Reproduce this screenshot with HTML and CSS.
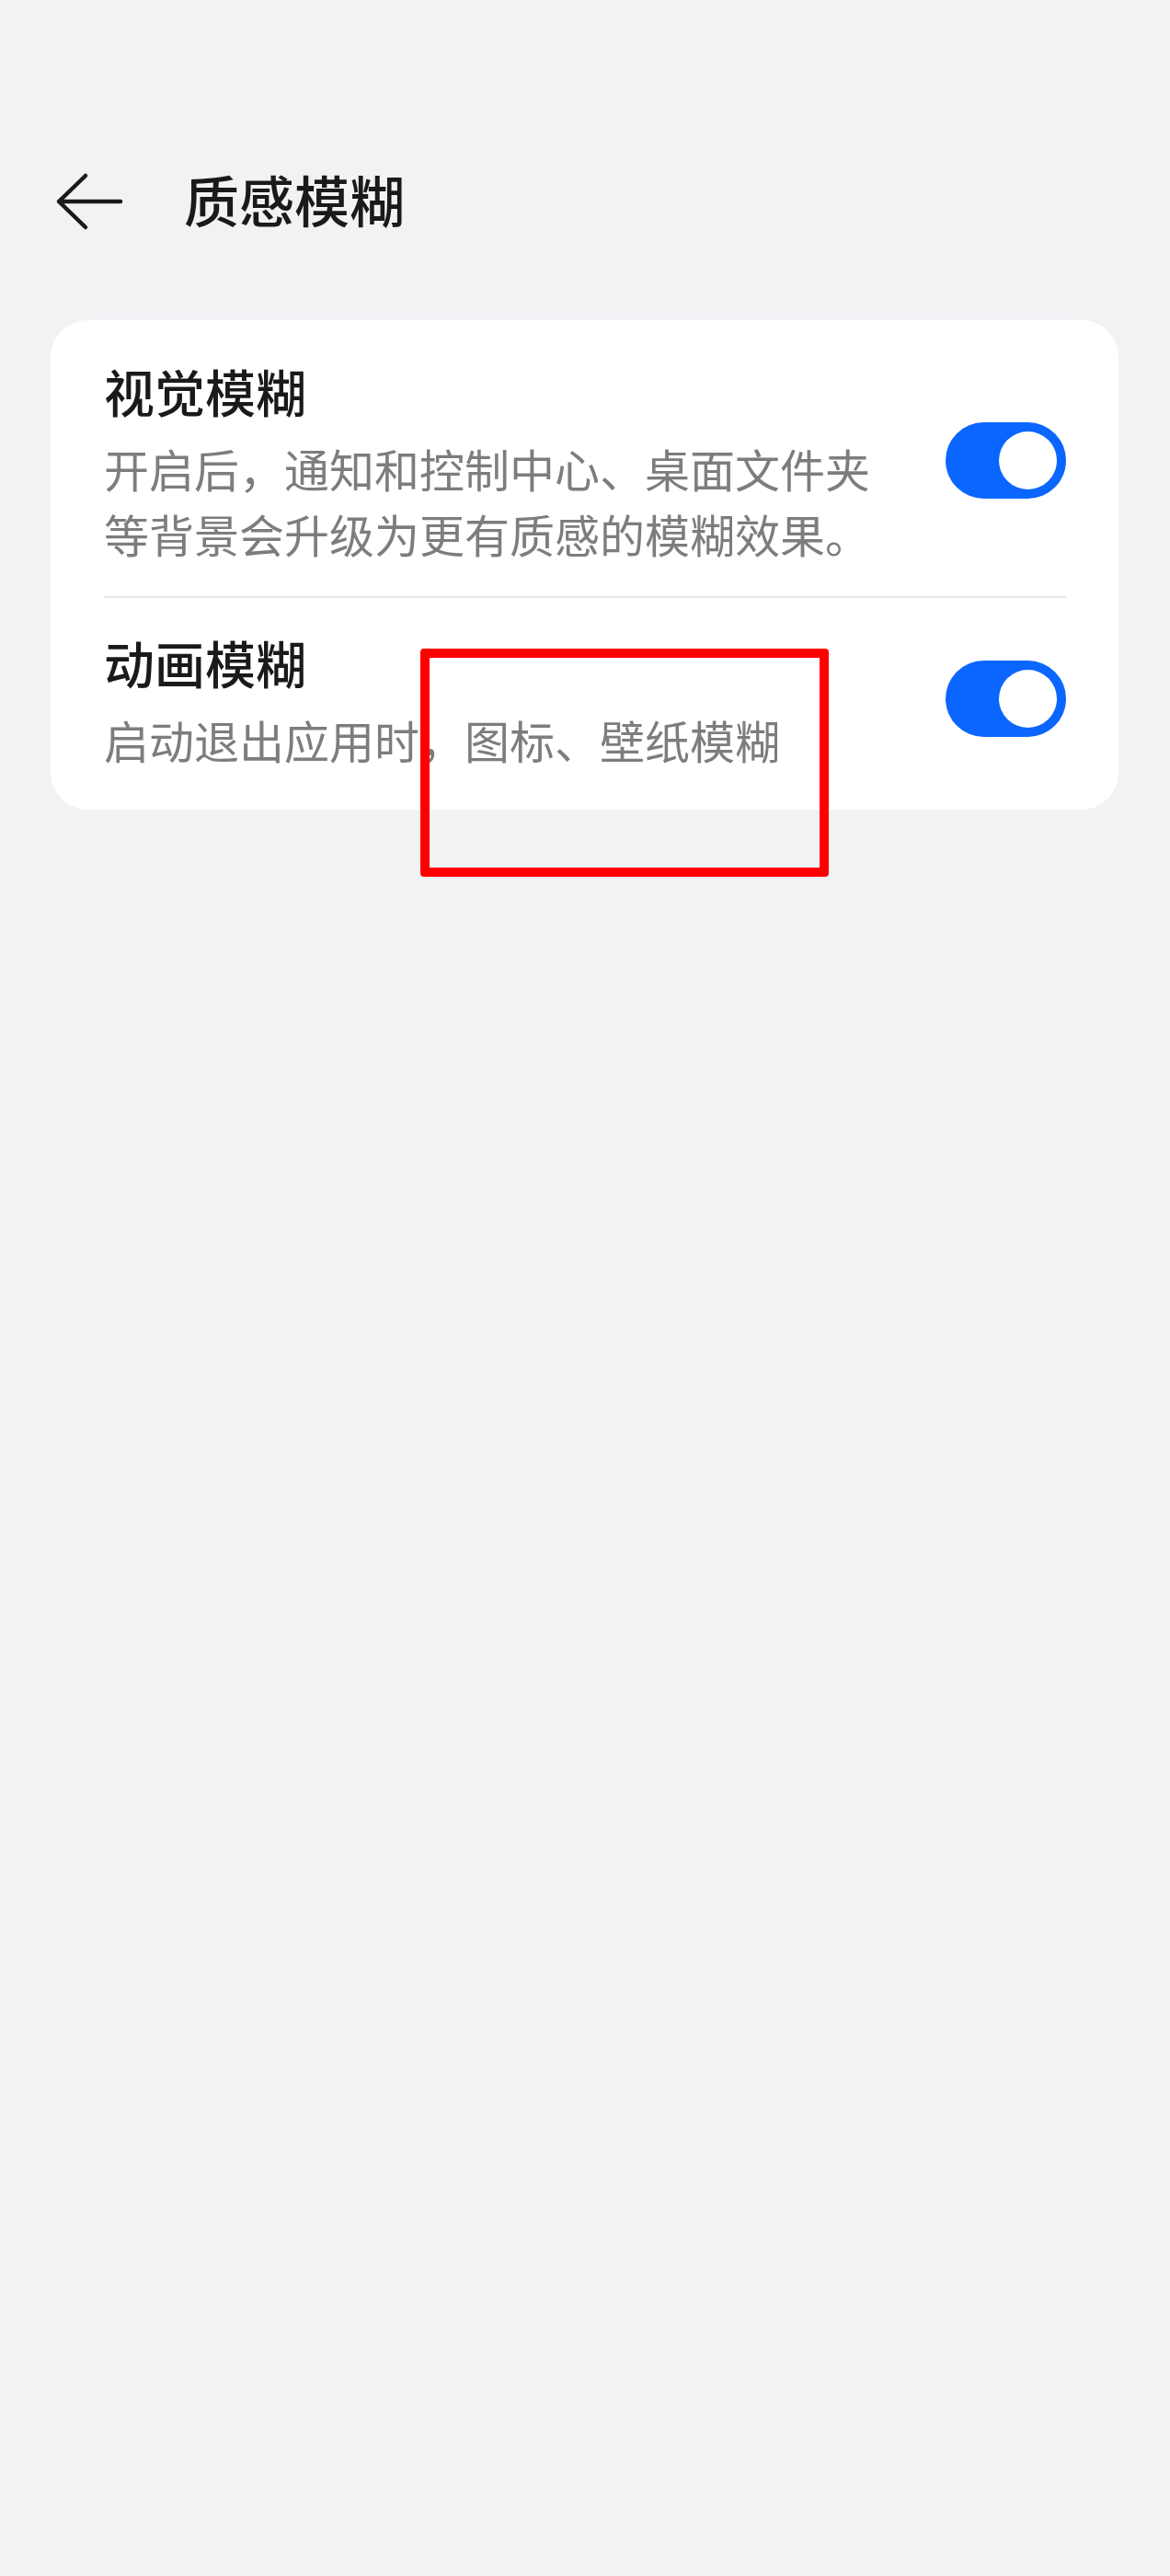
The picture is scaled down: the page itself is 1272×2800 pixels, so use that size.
FILE: index.html
```html
<!DOCTYPE html>
<html lang="zh-CN">
<head>
    <meta charset="UTF-8">
    <meta name="viewport" content="width=device-width, initial-scale=1.0">
    <title>质感模糊</title>
    <link rel="stylesheet" href="styles.css">
</head>
<body>

<div class="header">
    <svg class="back" width="76" height="66" viewBox="0 0 76 66">
        <path d="M4 33 L71 33 M33 5 L4 33 L33 61" fill="none" stroke="#1a1a1a" stroke-width="4.5" stroke-linecap="round" stroke-linejoin="round"/>
    </svg>
    <h1>质感模糊</h1>
</div>

<div class="card">
    <div class="row row-first">
        <div class="text">
            <div class="title">视觉模糊</div>
            <div class="desc">开启后，通知和控制中心、桌面文件夹等背景会升级为更有质感的模糊效果。</div>
        </div>
        <div class="toggle on"><span class="knob"></span></div>
    </div>
    <div class="divider"></div>
    <div class="row row-last">
        <div class="text">
            <div class="title">动画模糊</div>
            <div class="desc">启动退出应用时，图标、壁纸模糊</div>
        </div>
        <div class="toggle on"><span class="knob"></span></div>
    </div>
</div>

<div class="mark"></div>

</body>
</html>
```

FILE: styles.css
```css
body {
    font-family: "Noto Sans CJK SC", "Noto Sans", sans-serif;
    margin: 0;
    background-color: #f1f2f4;
    color: #1a1a1a;
    min-height: 2800px;
}
.header {
    display: flex;
    align-items: center;
    height: 80px;
    padding: 176px 0 0 60px;
}
.back {
    margin-top: 6px;
}
.header h1 {
    margin: 0 0 0 64px;
    font-size: 60px;
    font-weight: 500;
    line-height: 80px;
}
.card {
    margin: 92px 56px 0 55px;
    background-color: #fff;
    border-radius: 40px;
    padding: 0 57px 0 58px;
}
.row {
    display: flex;
    align-items: center;
    justify-content: space-between;
}
.row-first {
    padding: 41px 0 33px;
}
.row-last {
    padding: 34px 0 41px;
}
.text {
    width: 860px;
}
.title {
    font-size: 55px;
    font-weight: 500;
    line-height: 70px;
}
.desc {
    margin-top: 14px;
    font-size: 49px;
    line-height: 71px;
    color: #7d7d7d;
}
.divider {
    height: 2px;
    background-color: #e6e6e6;
}
.toggle {
    position: relative;
    width: 131px;
    height: 83px;
    margin-bottom: 4px;
    border-radius: 42px;
    background-color: #dcdcdc;
    flex-shrink: 0;
}
.toggle.on {
    background-color: #0a66ff;
}
.knob {
    position: absolute;
    top: 10px;
    right: 10px;
    width: 63px;
    height: 63px;
    border-radius: 50%;
    background-color: #fff;
}
.mark {
    position: absolute;
    left: 457px;
    top: 705px;
    width: 444px;
    height: 248px;
    box-sizing: border-box;
    border: 10px solid #ff0000;
    border-radius: 4px;
}
```
